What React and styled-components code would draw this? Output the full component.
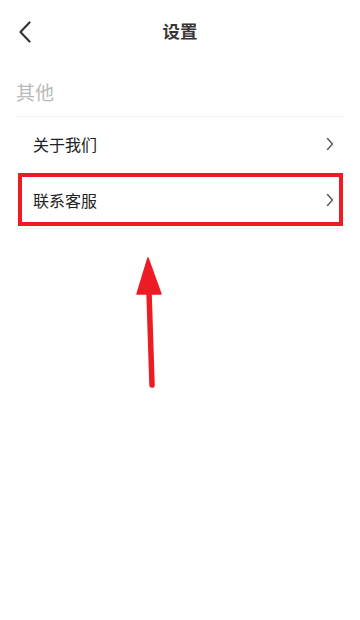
import styled, { createGlobalStyle } from "styled-components";

const GlobalStyle = createGlobalStyle`
  html, body {
    margin: 0;
    padding: 0;
    background: #fff;
    font-family: "Noto Sans CJK SC", "Noto Sans", sans-serif;
  }
  * {
    box-sizing: border-box;
  }
`;

const Page = styled.div`
  position: relative;
  width: 360px;
  height: 620px;
  background: #fff;
  overflow: hidden;
`;

const Header = styled.div`
  height: 60px;
  display: flex;
  align-items: center;
  justify-content: center;
  position: relative;
`;

const Back = styled.button`
  position: absolute;
  left: 12px;
  top: 18px;
  width: 26px;
  height: 28px;
  padding: 0;
  border: none;
  background: transparent;
  display: flex;
  align-items: center;
  justify-content: center;
`;

const Title = styled.h1`
  margin: 0;
  font-size: 17.5px;
  font-weight: 700;
  color: #3a3436;
`;

const Section = styled.div`
  padding: 0 16px;
`;

const SectionTitle = styled.div`
  font-size: 19px;
  color: #b9b9b9;
  height: 57px;
  padding-top: 7px;
  display: flex;
  align-items: center;
  border-bottom: 1px solid #f3f3f3;
`;

const Row = styled.div`
  position: relative;
  height: 56px;
  display: flex;
  align-items: center;
  justify-content: space-between;
  padding: 0 10px 2px 17px;
  border-bottom: 1px solid ${({ $last }) => ($last ? "#f3f3f3" : "transparent")};
  font-size: 16px;
  color: #222;
`;

const Highlight = styled.div`
  position: absolute;
  left: 2px;
  right: 1px;
  top: 0;
  bottom: 2px;
  border: 4px solid #ed1c24;
  pointer-events: none;
`;

const Arrow = styled.svg`
  position: absolute;
  left: 130px;
  top: 250px;
`;

const Chevron = () => (
  <svg width="8" height="14" viewBox="0 0 8 14">
    <path d="M1.5 1.5 L6.5 7 L1.5 12.5" fill="none" stroke="#555" strokeWidth="1.4" strokeLinecap="round" strokeLinejoin="round" />
  </svg>
);

export default function App() {
  return (
    <Page>
      <GlobalStyle />
      <Header>
        <Back>
          <svg width="14" height="22" viewBox="0 0 14 22">
            <path d="M11.5 1.5 L2.5 11 L11.5 20.5" fill="none" stroke="#3a3436" strokeWidth="2.2" strokeLinecap="round" strokeLinejoin="round" />
          </svg>
        </Back>
        <Title>设置</Title>
      </Header>
      <Section>
        <SectionTitle>其他</SectionTitle>
        <Row>
          <span>关于我们</span>
          <Chevron />
        </Row>
        <Row $last>
          <span>联系客服</span>
          <Chevron />
          <Highlight />
        </Row>
      </Section>
      <Arrow width="40" height="145" viewBox="0 0 40 145">
        <path d="M18 8 L7 44 L31 44 Z" fill="#ed1c24" stroke="#ed1c24" strokeWidth="1.5" strokeLinejoin="round" />
        <path d="M19 42 L22 135" stroke="#ed1c24" strokeWidth="5.5" strokeLinecap="round" />
      </Arrow>
    </Page>
  );
}
